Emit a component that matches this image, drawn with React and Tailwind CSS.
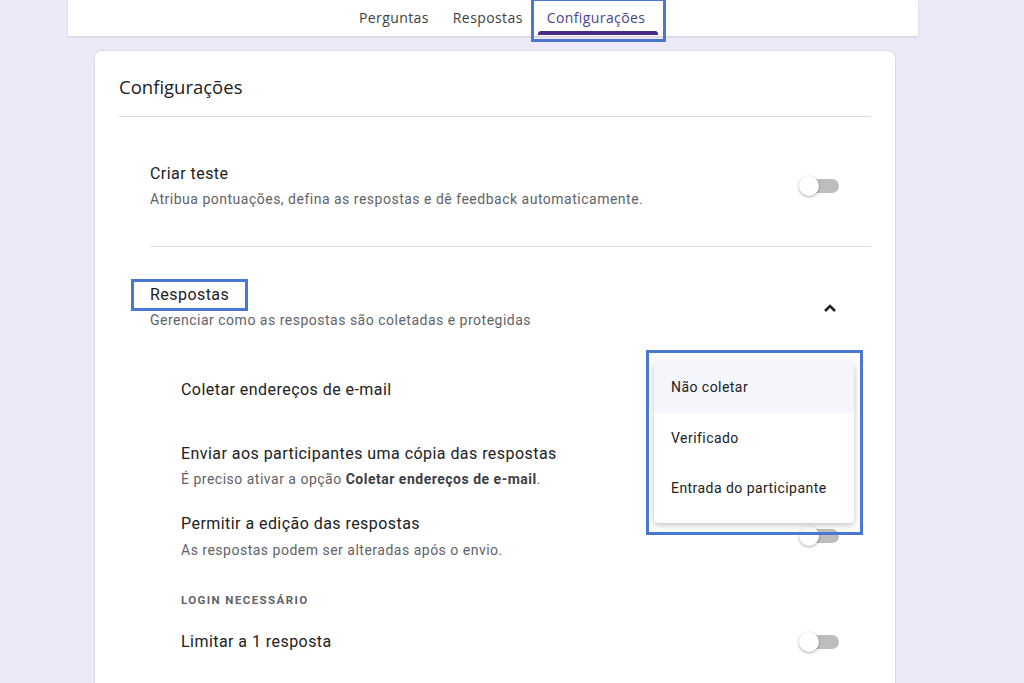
import React from "react";

function Toggle() {
  return (
    <div className="relative w-[40px] h-[20px] shrink-0">
      <div className="absolute top-[3px] bottom-[3px] left-[2px] right-0 rounded-full bg-[#bdbdbd]" />
      <div className="absolute left-0 top-0 w-[20px] h-[20px] rounded-full bg-white shadow-[0_1px_3px_rgba(0,0,0,0.35)]" />
    </div>
  );
}

export default function App() {
  const roboto = { fontFamily: "Roboto, 'Liberation Sans', sans-serif" };
  return (
    <div
      className="relative w-[1024px] h-[683px] overflow-hidden bg-[#ede9f8]"
      style={roboto}
    >
      {/* top tab bar */}
      <div className="ml-[68px] w-[850px] h-[36px] bg-white shadow-[0_1px_2px_rgba(0,0,0,0.12)] flex items-end pl-[279px] relative z-10 font-['Open_Sans',sans-serif]">
        <div className="px-3 h-full pb-[2px] flex items-center text-[14px] font-medium text-[#3c4043] tracking-[0.4px]">
          Perguntas
        </div>
        <div className="px-3 h-full pb-[2px] flex items-center text-[14px] font-medium text-[#3c4043] tracking-[0.4px]">
          Respostas
        </div>
        <div className="relative px-3 h-full pb-[2px] flex items-center text-[14px] font-medium text-[#4f3f8c] tracking-[0.4px]">
          Configurações
          <div className="absolute left-[3px] right-[-1px] bottom-[1px] h-[4px] rounded-t-[3px] bg-[#4a2d8a]" />
          <div className="absolute left-[-4px] right-[-9px] top-[-2px] h-[44px] border-[3px] border-[#4a78d0]" />
        </div>
      </div>

      {/* card */}
      <div className="relative ml-[94px] mt-[14px] w-[802px] h-[700px] bg-white rounded-[8px] border border-[#dadce0] px-[24px]">
        <div className="pt-[24px] pb-[17px] border-b border-[#dadce0] text-[18.5px] leading-[24px] text-[#202124] font-['Open_Sans',sans-serif]">
          Configurações
        </div>

        <div className="ml-[31px]">
          {/* Criar teste */}
          <div className="pt-[45px] pb-[37px] border-b border-[#e0e0e0] flex items-center justify-between pr-[32px]">
            <div>
              <div className="text-[16px] leading-[24px] text-[#202124] tracking-[0.45px]">Criar teste</div>
              <div className="mt-[3px] text-[14px] leading-[20px] text-[#5f6368] tracking-[0.5px]">
                Atribua pontuações, defina as respostas e dê feedback automaticamente.
              </div>
            </div>
            <Toggle />
          </div>

          {/* Respostas */}
          <div className="pt-[36px] flex items-center justify-between pr-[34px]">
            <div>
              <div className="relative inline-block text-[16px] leading-[24px] text-[#202124] tracking-[0.45px]">
                Respostas
                <div className="absolute left-[-19px] top-[-4px] w-[117px] h-[32px] border-[3px] border-[#4a78d0]" />
              </div>
              <div className="mt-[3px] text-[14px] leading-[20px] text-[#5f6368] tracking-[0.5px]">
                Gerenciar como as respostas são coletadas e protegidas
              </div>
            </div>
            <svg width="14" height="10" viewBox="0 0 14 10" className="mt-[2px]">
              <polyline points="2,8 7,3 12,8" fill="none" stroke="#202124" strokeWidth="2.6" />
            </svg>
          </div>

          <div className="pl-[31px] pr-[32px]">
            <div className="mt-[48px] flex items-center justify-between">
              <div className="text-[16px] leading-[24px] text-[#202124] tracking-[0.45px]">Coletar endereços de e-mail</div>
            </div>

            <div className="mt-[40px] flex items-center justify-between">
              <div>
                <div className="text-[16px] leading-[24px] text-[#202124] tracking-[0.45px]">
                  Enviar aos participantes uma cópia das respostas
                </div>
                <div className="mt-[3px] text-[14px] leading-[20px] text-[#5f6368] tracking-[0.5px]">
                  É preciso ativar a opção <span className="font-bold text-[#3c4043]">Coletar endereços de e-mail</span>.
                </div>
              </div>
              <Toggle />
            </div>

            <div className="mt-[23px] flex items-center justify-between">
              <div>
                <div className="text-[16px] leading-[24px] text-[#202124] tracking-[0.45px]">Permitir a edição das respostas</div>
                <div className="mt-[4px] text-[14px] leading-[20px] text-[#5f6368] tracking-[0.5px]">
                  As respostas podem ser alteradas após o envio.
                </div>
              </div>
              <Toggle />
            </div>

            <div className="mt-[32px] text-[11.5px] leading-[16px] font-bold tracking-[1.4px] text-[#5f6368]">
              LOGIN NECESSÁRIO
            </div>

            <div className="mt-[22px] flex items-center justify-between">
              <div className="text-[16px] leading-[24px] text-[#202124] tracking-[0.45px]">Limitar a 1 resposta</div>
              <Toggle />
            </div>
          </div>
        </div>

        {/* dropdown menu */}
        <div className="absolute left-[559px] top-[311px] w-[200px] pb-[10px] bg-white rounded-[4px] shadow-[0_2px_6px_rgba(0,0,0,0.25)] z-20 tracking-[0.45px]">
          <div className="h-[51px] flex items-center pl-[17px] bg-[#f4f6fc] text-[14px] text-[#202124]">Não coletar</div>
          <div className="h-[50px] flex items-center pl-[17px] text-[14px] text-[#202124]">Verificado</div>
          <div className="h-[50px] flex items-center pl-[17px] text-[14px] text-[#202124]">Entrada do participante</div>
        </div>
        <div className="absolute left-[551px] top-[299px] w-[217px] h-[185px] border-[3px] border-[#4a78d0] z-30" />
      </div>
    </div>
  );
}
